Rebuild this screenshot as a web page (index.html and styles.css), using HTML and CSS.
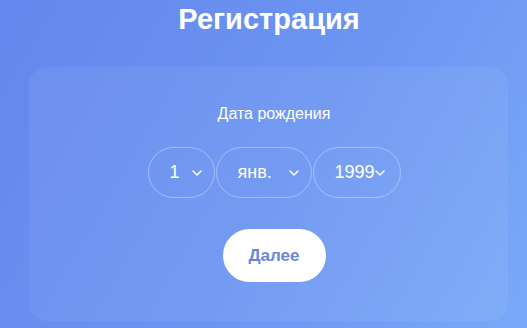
FILE: index.html
```html
<!DOCTYPE html>
<html lang="ru">

<head>
    <meta charset="UTF-8">
    <meta name="viewport" content="width=device-width, initial-scale=1.0">
    <title>Регистрация</title>
    <link rel="stylesheet" href="styles.css">
</head>

<body>
    <h1 class="title">Регистрация</h1>

    <div class="card">
        <div class="label">Дата рождения</div>

        <div class="dateRow">
            <div class="pick pickDay">
                <span>1</span>
                <svg class="chev" width="10" height="6" viewBox="0 0 10 6"><path d="M1 1l4 4 4-4" /></svg>
            </div>
            <div class="pick pickMonth">
                <span>янв.</span>
                <svg class="chev" width="10" height="6" viewBox="0 0 10 6"><path d="M1 1l4 4 4-4" /></svg>
            </div>
            <div class="pick pickYear">
                <span>1999</span>
                <svg class="chev" width="10" height="6" viewBox="0 0 10 6"><path d="M1 1l4 4 4-4" /></svg>
            </div>
        </div>

        <button class="next">Далее</button>
    </div>
</body>

</html>
```

FILE: styles.css
```css
body {
    margin: 0;
    height: 100vh;
    overflow: hidden;
    background: linear-gradient(120deg, #6387ee 0%, #6c95f2 55%, #79a9f8 100%);
    font-family: "Liberation Sans", Arial, sans-serif;
    color: #fff;
}

.title {
    margin: 0;
    padding-top: 2px;
    width: 538px;
    text-align: center;
    font-size: 29px;
    line-height: 35px;
    font-weight: bold;
}

.card {
    margin: 30px 0 0 29px;
    width: 479px;
    height: 254px;
    box-sizing: border-box;
    padding: 37px 0 0 11px;
    border-radius: 18px;
    background: rgba(255, 255, 255, 0.06);
    display: flex;
    flex-direction: column;
    align-items: center;
}

.label {
    font-size: 16px;
    line-height: 20px;
}

.dateRow {
    display: flex;
    gap: 1px;
    margin-top: 23px;
}

.pick {
    height: 51px;
    box-sizing: border-box;
    border: 1px solid rgba(255, 255, 255, 0.35);
    border-radius: 26px;
    display: flex;
    align-items: center;
    justify-content: space-between;
    padding: 0 12px 0 21px;
    font-size: 18px;
}

.pickDay {
    width: 67px;
}

.pickMonth {
    width: 96px;
}

.pickYear {
    width: 88px;
    padding-right: 15px;
}

.chev {
    flex-shrink: 0;
    fill: none;
    stroke: #fff;
    stroke-width: 1.5;
    stroke-linecap: round;
    stroke-linejoin: round;
}

.next {
    margin-top: 31px;
    width: 103px;
    height: 53px;
    border: none;
    border-radius: 27px;
    background: #fff;
    color: #6a86da;
    font-family: "Liberation Sans", Arial, sans-serif;
    font-size: 17px;
    font-weight: bold;
}
```
